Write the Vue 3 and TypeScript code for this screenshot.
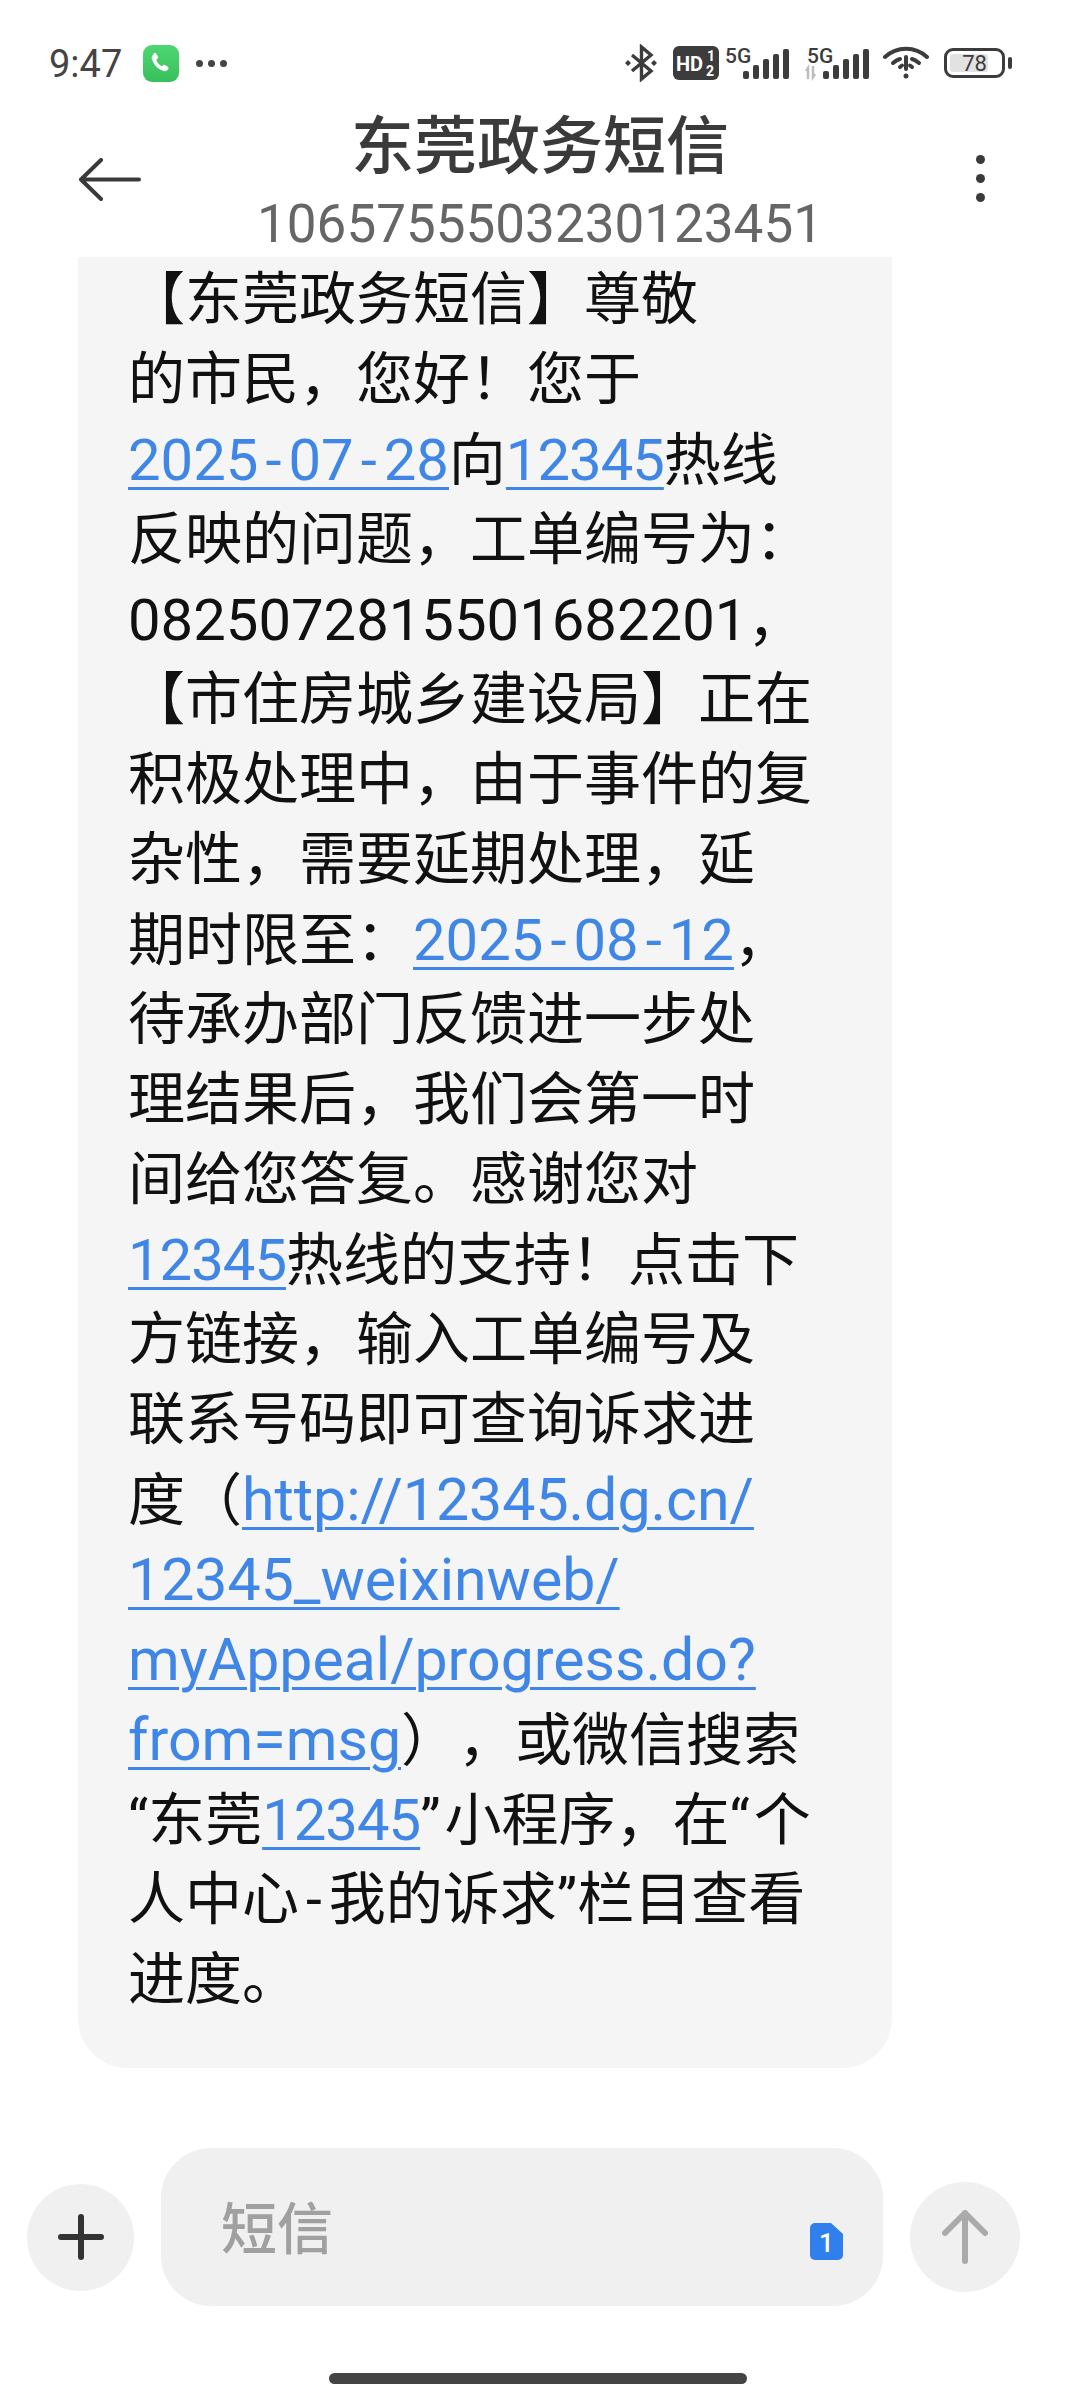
<script setup lang="ts">
interface Seg {
  t: string;
  k?: 'link' | 'short' | 'date' | 'num' | 'quote' | 'dash';
}

// full-width punctuation of the message body
const COMMA = '\uFF0C';
const BANG = '\uFF01';
const COLON = '\uFF1A';
const OPEN = '\uFF08';
const CLOSE = '\uFF09';

const lines: Seg[][] = [
  [{ t: '【东莞政务短信】尊敬' }],
  [{ t: `的市民${COMMA}您好${BANG}您于` }],
  [{ t: '2025-07-28', k: 'date' }, { t: '向' }, { t: '12345', k: 'short' }, { t: '热线' }],
  [{ t: `反映的问题${COMMA}工单编号为${COLON}` }],
  [{ t: '0825072815501682201', k: 'num' }, { t: COMMA }],
  [{ t: '【市住房城乡建设局】正在' }],
  [{ t: `积极处理中${COMMA}由于事件的复` }],
  [{ t: `杂性${COMMA}需要延期处理${COMMA}延` }],
  [{ t: `期时限至${COLON}` }, { t: '2025-08-12', k: 'date' }, { t: COMMA }],
  [{ t: '待承办部门反馈进一步处' }],
  [{ t: `理结果后${COMMA}我们会第一时` }],
  [{ t: '间给您答复。感谢您对' }],
  [{ t: '12345', k: 'short' }, { t: `热线的支持${BANG}点击下` }],
  [{ t: `方链接${COMMA}输入工单编号及` }],
  [{ t: '联系号码即可查询诉求进' }],
  [{ t: `度${OPEN}` }, { t: 'http://12345.dg.cn/', k: 'link' }],
  [{ t: '12345_weixinweb/', k: 'link' }],
  [{ t: 'myAppeal/progress.do?', k: 'link' }],
  [{ t: 'from=msg', k: 'link' }, { t: `${CLOSE}${COMMA}或微信搜索` }],
  [{ t: '“东莞' }, { t: '12345', k: 'short' }, { t: '”', k: 'quote' }, { t: `小程序${COMMA}在` }, { t: '“', k: 'quote' }, { t: '个' }],
  [{ t: '人中心' }, { t: '-', k: 'dash' }, { t: '我的诉求”栏目查看' }],
  [{ t: '进度。' }],
];

const bars = [8, 14, 20, 25, 30];
</script>

<template>
  <div class="page">
    <div class="status">
      <div class="status-left">
        <span class="time">9:47</span>
        <svg class="call" width="36" height="37" viewBox="0 0 36 37">
          <defs>
            <linearGradient id="callg" x1="0" y1="0" x2="0" y2="1">
              <stop offset="0" stop-color="#4fd672" />
              <stop offset="1" stop-color="#36c05c" />
            </linearGradient>
          </defs>
          <rect width="36" height="37" rx="9" fill="url(#callg)" />
          <path d="M10.5 8.5c1.2-.8 2.4-.6 3 .5l1.4 2.7c.4.8.2 1.6-.5 2.1l-1.2.9c.9 2.800 2.900 5.100 5.600 6.500l1.200-1c.7-.6 1.500-.6 2.200-.1l2.500 1.700c1 .7 1.100 1.900.2 2.900-1.200 1.300-2.800 1.800-4.600 1.200-5.800-2-10-6.500-11.500-12.200-.4-1.900.4-3.300 1.700-4.200z" fill="#fff" />
        </svg>
        <span class="dots"><i /><i /><i /></span>
      </div>
      <div class="status-right">
        <svg class="bt" width="36" height="38" viewBox="0 0 36 38" fill="none" stroke="#3c3c3c" stroke-width="3.4">
          <path d="M9 11l19 16-9.500 8V3l9.500 8L9 27" />
          <path d="M2 19l3-3 3 3-3 3zM28 19l3-3 3 3-3 3z" fill="#3c3c3c" stroke="none" />
        </svg>
        <svg class="hd" width="46" height="34" viewBox="0 0 46 34">
          <rect width="46" height="34" rx="6" fill="#3c3c3c" />
          <text x="3" y="25" font-size="20" font-weight="700" fill="#fff" font-family="Roboto, sans-serif">HD</text>
          <text x="34" y="15" font-size="14" font-weight="700" fill="#fff" font-family="Roboto, sans-serif">1</text>
          <text x="33" y="30" font-size="14" font-weight="700" fill="#fff" font-family="Roboto, sans-serif">2</text>
        </svg>
        <svg class="sig1" width="66" height="40" viewBox="0 0 66 40">
          <text x="0" y="20" font-size="21" font-weight="500" fill="#3c3c3c" font-family="Roboto, sans-serif">5G</text>
          <rect v-for="(h, i) in bars" :key="i" :x="18 + i * 10" :y="36 - h" width="6" :height="h" rx="2" fill="#3c3c3c" />
        </svg>
        <svg width="66" height="40" viewBox="0 0 66 40">
          <text x="2" y="20" font-size="21" font-weight="500" fill="#3c3c3c" font-family="Roboto, sans-serif">5G</text>
          <path d="M3 36V25l-2 3M8 23v11l2-3" stroke="#bdbdbd" stroke-width="2.500" fill="none" />
          <rect v-for="(h, i) in bars" :key="i" :x="18 + i * 10" :y="36 - h" width="6" :height="h" rx="2" fill="#3c3c3c" />
        </svg>
        <svg width="46" height="34" viewBox="0 0 46 34" fill="none" stroke="#3c3c3c" stroke-width="4" stroke-linecap="round">
          <path d="M2 11C14 0 32 0 44 11" />
          <path d="M10 17c3-2.500 5-3.500 7-4M36 17c-3-2.500-5-3.500-7-4" />
          <path d="M17 21l2-1.500M29 21l-2-1.500" />
          <path d="M23 11v12" />
          <circle cx="23" cy="30" r="2.500" fill="#3c3c3c" stroke="none" />
        </svg>
        <div class="battery">
          <div class="battery-body">
            <div class="battery-fill" />
            <span class="battery-num">78</span>
          </div>
          <div class="battery-tip" />
        </div>
      </div>
    </div>

    <div class="header">
      <svg class="back" width="62" height="43" viewBox="0 0 62 43" fill="none" stroke="#3a3a3a" stroke-width="4" stroke-linecap="round" stroke-linejoin="round">
        <path d="M22 2L2 21.500l20 19.500M2 21.500h58" />
      </svg>
      <div class="title-wrap">
        <div class="title">东莞政务短信</div>
        <div class="number">1065755503230123451</div>
      </div>
      <div class="more"><i /><i /><i /></div>
    </div>

    <div class="bubble">
      <div v-for="(line, i) in lines" :key="i" class="line">
        <template v-for="(seg, j) in line" :key="j">
          <a v-if="seg.k === 'link'" class="link">{{ seg.t }}</a>
          <a v-else-if="seg.k === 'short'" class="link short">{{ seg.t }}</a>
          <a v-else-if="seg.k === 'date'" class="link date"><template v-for="(part, p) in seg.t.split('-')" :key="p"><span v-if="p > 0" class="dash">-</span>{{ part }}</template></a>
          <span v-else-if="seg.k === 'num'" class="num">{{ seg.t }}</span>
          <span v-else-if="seg.k === 'quote'" class="quote">{{ seg.t }}</span>
          <span v-else-if="seg.k === 'dash'" class="dash">{{ seg.t }}</span>
          <template v-else>{{ seg.t }}</template>
        </template>
      </div>
    </div>

    <div class="spacer" />

    <div class="composer">
      <button class="round plus">
        <svg width="46" height="46" viewBox="0 0 46 46" stroke="#333" stroke-width="6" stroke-linecap="round">
          <path d="M23 3v40M3 23h40" />
        </svg>
      </button>
      <div class="input">
        <span class="placeholder">短信</span>
        <svg class="sim" width="33" height="37" viewBox="0 0 33 37">
          <path d="M5 0h16l12 11v21a5 5 0 0 1-5 5H5a5 5 0 0 1-5-5V5a5 5 0 0 1 5-5z" fill="#2f80ed" />
          <text x="16.500" y="29" text-anchor="middle" font-size="26" font-weight="500" fill="#fff" font-family="Roboto, sans-serif">1</text>
        </svg>
      </div>
      <button class="round send">
        <svg width="46" height="54" viewBox="0 0 46 54" fill="none" stroke="#aaa" stroke-width="6" stroke-linecap="round" stroke-linejoin="round">
          <path d="M3 23L23 3l20 20M23 3v48" />
        </svg>
      </button>
    </div>

    <div class="home-row"><div class="home-bar" /></div>
  </div>
</template>

<style>
html,
body {
  margin: 0;
  background: #fff;
}
</style>

<style scoped>
.page {
  width: 1080px;
  height: 2400px;
  display: flex;
  flex-direction: column;
  background: #fff;
  font-family: Roboto, "Noto Sans CJK SC", sans-serif;
  text-spacing-trim: space-all;
  overflow: hidden;
}

/* status bar */
.status {
  height: 100px;
  padding: 44px 68px 0 49px;
  box-sizing: border-box;
  display: flex;
  justify-content: space-between;
  align-items: flex-start;
}
.status-left {
  display: flex;
  align-items: center;
  height: 38px;
}
.time {
  font-size: 38px;
  line-height: 38px;
  color: #444;
  width: 94px;
  padding-top: 2px;
}
.dots {
  display: flex;
  gap: 5px;
  margin-left: 17px;
}
.dots i {
  width: 7px;
  height: 7px;
  border-radius: 50%;
  background: #444;
}
.status-right {
  display: flex;
  align-items: center;
  height: 38px;
  gap: 12px;
}
.status-right svg {
  flex-shrink: 0;
}
.bt {
  margin-right: 2px;
}
.hd {
  margin-right: -6px;
}
.sig1 {
  margin-right: 2px;
}
.battery {
  display: flex;
  align-items: center;
  gap: 3px;
  margin-left: 3px;
}
.battery-body {
  position: relative;
  width: 61px;
  height: 30px;
  box-sizing: border-box;
  border: 3px solid #3c3c3c;
  border-radius: 9px;
  display: flex;
  align-items: center;
  justify-content: center;
}
.battery-fill {
  position: absolute;
  left: 3px;
  top: 3px;
  bottom: 3px;
  width: 38px;
  background: #e2e2e2;
  border-radius: 3px;
}
.battery-num {
  position: relative;
  font-size: 22px;
  color: #3c3c3c;
}
.battery-tip {
  width: 4px;
  height: 12px;
  background: #3c3c3c;
  border-radius: 2px;
}

/* header */
.header {
  height: 157px;
  display: flex;
  align-items: flex-start;
  justify-content: space-between;
  padding: 0 95px 0 79px;
  box-sizing: border-box;
  position: relative;
}
.back {
  margin-top: 58px;
}
.title-wrap {
  position: absolute;
  left: 0;
  right: 0;
  top: 11px;
  text-align: center;
}
.title {
  font-size: 63px;
  line-height: 72px;
  font-weight: 500;
  color: #3a3a3a;
}
.number {
  margin-top: 9px;
  font-size: 53px;
  line-height: 64px;
  color: #666;
}
.more {
  margin-top: 55px;
  display: flex;
  flex-direction: column;
  gap: 10px;
}
.more i {
  width: 9px;
  height: 9px;
  border-radius: 50%;
  background: #3a3a3a;
}

/* message bubble */
.bubble {
  width: 814px;
  height: 1811px;
  margin-left: 78px;
  padding: 3px 0 0 50px;
  box-sizing: border-box;
  background: #f5f5f5;
  border-radius: 0 0 50px 50px;
  flex-shrink: 0;
}
.line {
  height: 80px;
  line-height: 80px;
  font-size: 57px;
  color: #111;
  white-space: nowrap;
}
.link {
  font-size: 59px;
  color: #3f86e6;
  text-decoration: underline;
  text-decoration-thickness: 3px;
  text-underline-offset: 7px;
}
.short {
  font-size: 58px;
  letter-spacing: -1px;
}
/* the underline has to run on under the spaced hyphens */
.date {
  font-size: 58px;
  text-decoration: none;
  background: linear-gradient(#3f86e6, #3f86e6) 0 calc(100% - 4px) / 100% 3px no-repeat;
}
.dash {
  margin: 0 7px;
}
.quote {
  letter-spacing: 4px;
}
.num {
  font-size: 58px;
}

.spacer {
  flex: 1;
}

/* composer */
.composer {
  display: flex;
  align-items: center;
  padding: 0 0 0 27px;
  height: 158px;
}
.round {
  flex-shrink: 0;
  border: none;
  padding: 0;
  margin-top: 20px;
  border-radius: 50%;
  background: #f0f0f0;
  display: flex;
  align-items: center;
  justify-content: center;
}
.plus {
  width: 107px;
  height: 107px;
}
.send {
  width: 110px;
  height: 110px;
  margin-left: 27px;
}
.input {
  position: relative;
  width: 722px;
  height: 158px;
  margin-left: 27px;
  background: #f0f0f0;
  border-radius: 50px;
  display: flex;
  align-items: center;
  padding-left: 60px;
  box-sizing: border-box;
}
.placeholder {
  font-size: 56px;
  font-weight: 500;
  color: #a0a0a0;
  margin-top: -5px;
}
.sim {
  position: absolute;
  right: 40px;
  bottom: 46px;
}

.home-row {
  height: 94px;
  padding-top: 67px;
  box-sizing: border-box;
  display: flex;
  justify-content: center;
}
.home-bar {
  width: 418px;
  height: 11px;
  border-radius: 6px;
  background: #444;
  margin-left: -4px;
}
</style>
